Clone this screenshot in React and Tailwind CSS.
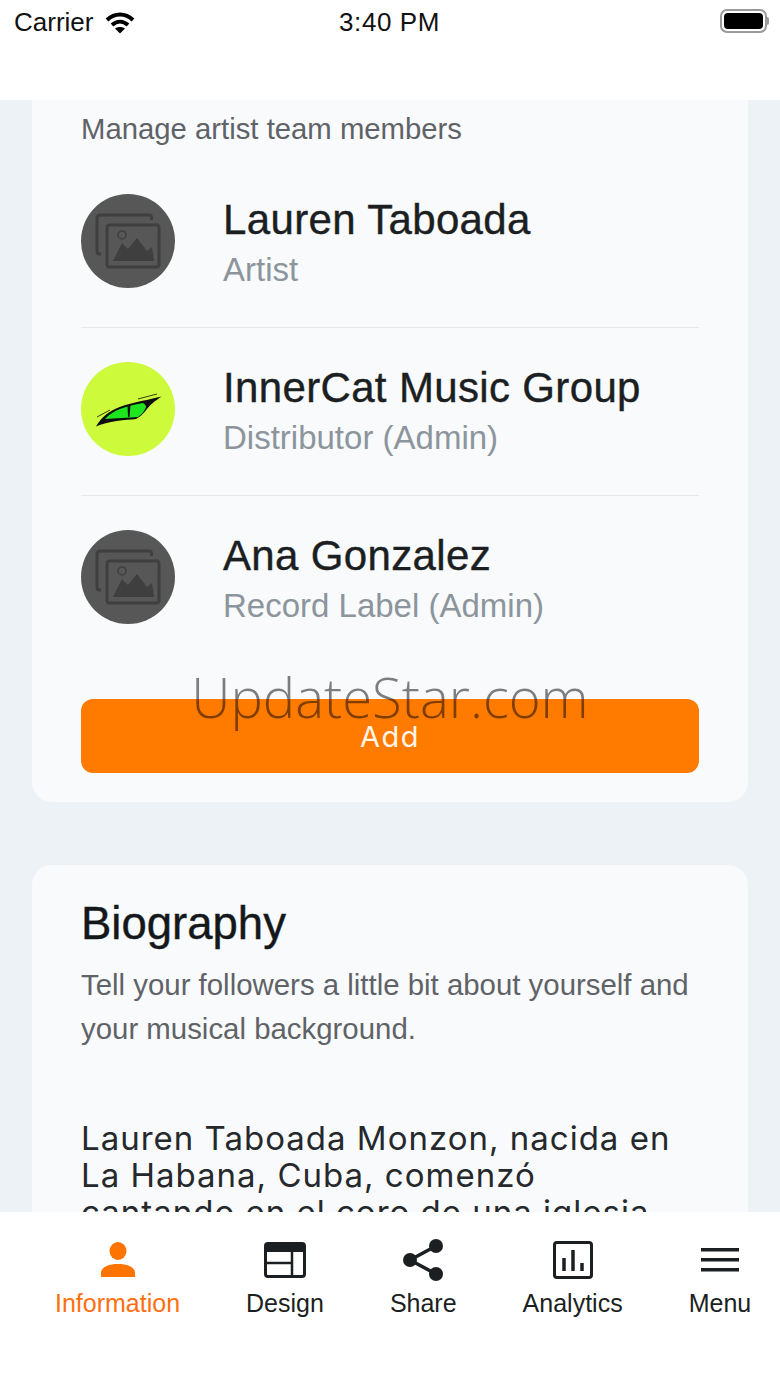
import React from "react";

const helvetica = "font-['Liberation_Sans',Arial,sans-serif]";

const members = [
  { name: "Lauren Taboada", role: "Artist", avatar: "placeholder" },
  { name: "InnerCat Music Group", role: "Distributor (Admin)", avatar: "cat" },
  { name: "Ana Gonzalez", role: "Record Label (Admin)", avatar: "placeholder" },
];

const PlaceholderAvatar = () => (
  <div className="flex h-[94px] w-[94px] shrink-0 items-center justify-center rounded-full bg-[#575757]">
    <svg width="66" height="56" viewBox="0 0 66 56" fill="none">
      <path d="M6 41H4.500A2.500 2.500 0 0 1 2 38.500V5a3 3 0 0 1 3-3h49a2.500 2.500 0 0 1 2.500 2.500V7" stroke="#3f3f3f" strokeWidth="3" />
      <rect x="12" y="12" width="52" height="42" rx="2.500" stroke="#3f3f3f" strokeWidth="3" />
      <path d="M18 48 27 30l6 6 9-11 10 13 5-4 2 14z" fill="#3f3f3f" />
      <circle cx="27" cy="22" r="4" stroke="#3f3f3f" strokeWidth="1.500" />
    </svg>
  </div>
);

const CatAvatar = () => (
  <div className="flex h-[94px] w-[94px] shrink-0 items-center justify-center rounded-full bg-[#cdfb3b]">
    <svg width="70" height="36" viewBox="0 0 70 36">
      <path d="M3 35.500C8 27 14 22 22 18 32 13 50 10 68.700 5.500 62 10 58 13 54 18 50 23 47 26 43 28 34 29 14 30 3 35.500z" fill="#0d0d0d" />
      <path d="M12 28C17 23 21 20 27 18 35 15 44 13 50 12 52 13 53 15 53 16 51 21 48 24 45 26 36 27 22 27 12 28z" fill="#1fe51f" />
      <path d="M34.500 14h3l-1 12h-1.500z" fill="#0d0d0d" />
      <path d="M45 8 64 3M4 26 17 19" stroke="#0d0d0d" strokeWidth="0.800" fill="none" />
    </svg>
  </div>
);

const MemberRow = ({ member, last }) => (
  <div className={`flex items-center ${last ? "" : "mb-[34px] border-b border-[#e6e9ec] pb-[39px]"}`}>
    <div className="w-[142px] shrink-0">
      {member.avatar === "cat" ? <CatAvatar /> : <PlaceholderAvatar />}
    </div>
    <div className="pt-[2px]">
      <div className="text-[42px] font-medium leading-[48px] tracking-[0.35px] text-[#1c1f22] [-webkit-text-stroke:0.4px_#1c1f22]">{member.name}</div>
      <div className="mt-[8px] text-[33px] leading-[36px] text-[#8d959c]">{member.role}</div>
    </div>
  </div>
);

const PersonIcon = () => (
  <svg width="36" height="36" viewBox="0 0 36 36" fill="#ff7300">
    <ellipse cx="18" cy="9" rx="8.500" ry="9" />
    <path d="M1 35v-4c0-6 8-9 17-9s17 3 17 9v4z" />
  </svg>
);

const DesignIcon = () => (
  <svg width="42" height="36" viewBox="0 0 42 36">
    <rect x="1.500" y="1.500" width="39" height="33" rx="2.500" fill="white" stroke="#1c1f22" strokeWidth="3" />
    <rect x="1" y="1" width="40" height="9" rx="2" fill="#1c1f22" />
    <path d="M28 10v24M3 21h25" stroke="#1c1f22" strokeWidth="2.500" />
  </svg>
);

const ShareIcon = () => (
  <svg width="40" height="42" viewBox="0 0 40 42" fill="#1c1f22">
    <circle cx="33" cy="7" r="7" />
    <circle cx="7" cy="21" r="7" />
    <circle cx="33" cy="35" r="7" />
    <path d="M33 7 7 21l26 14" fill="none" stroke="#1c1f22" strokeWidth="3.500" />
  </svg>
);

const AnalyticsIcon = () => (
  <svg width="40" height="38" viewBox="0 0 40 38">
    <rect x="1.500" y="1.500" width="37" height="35" rx="2.500" fill="white" stroke="#1c1f22" strokeWidth="3" />
    <path d="M11 17v13M20 9v21M29 22v8" stroke="#1c1f22" strokeWidth="3.500" />
  </svg>
);

const MenuIcon = () => (
  <svg width="38" height="24" viewBox="0 0 38 24" fill="#1c1f22">
    <rect width="38" height="3.500" />
    <rect y="10" width="38" height="3.500" />
    <rect y="20" width="38" height="3.500" />
  </svg>
);

const tabs = [
  { label: "Information", icon: <PersonIcon />, active: true },
  { label: "Design", icon: <DesignIcon /> },
  { label: "Share", icon: <ShareIcon /> },
  { label: "Analytics", icon: <AnalyticsIcon /> },
  { label: "Menu", icon: <MenuIcon /> },
];

export default function App() {
  return (
    <div className={`relative flex h-[1387px] w-[780px] flex-col overflow-hidden bg-white ${helvetica}`}>
      {/* Status bar */}
      <div className="relative flex h-[100px] shrink-0 items-start justify-between bg-white pl-[14px] pr-[11px] pt-[9px] text-[26px] leading-[26px] text-[#111]">
        <div className="flex items-center gap-[12px]">
          <span>Carrier</span>
          <svg width="30" height="23" viewBox="0 0 30 22" fill="none" stroke="#000" strokeWidth="4">
            <path d="M2 8.500C9.500 1 20.500 1 28 8.500" />
            <path d="M7 13.500C12 9 18 9 23 13.500" />
            <path d="M15 22 10 17C13 15 17 15 20 17z" fill="#000" stroke="none" />
          </svg>
        </div>
        <span className="absolute left-[339px] top-[9px] font-medium tracking-[0.6px]">3:40 PM</span>
        <div className="flex items-center">
          <div className="flex h-[24px] w-[47px] items-center rounded-[7px] border-2 border-[#9a9a9a] p-[2px]">
            <div className="h-full w-full rounded-[4px] bg-black" />
          </div>
          <div className="h-[8px] w-[2px] rounded-r bg-[#9a9a9a]" />
        </div>
      </div>

      {/* Scrolling content */}
      <div className="flex-1 overflow-hidden bg-[#edf2f7] px-[32px]">
        <div className="rounded-b-[20px] bg-[#f8fafc] px-[49px] pb-[29px] pt-[7px]">
          <p className="mb-[43px] text-[29.300px] leading-[44px] text-[#5f6367]">Manage artist team members</p>
          {members.map((m, i) => (
            <MemberRow key={m.name} member={m} last={i === members.length - 1} />
          ))}
          <button className="mt-[75px] flex h-[74px] w-full items-center justify-center rounded-[12px] bg-[#ff7b00] pt-[2px] font-['Inter',sans-serif] text-[29px] font-normal tracking-[1.5px] text-[#fff5ea]">
            Add
          </button>
        </div>

        <div className="mt-[63px] rounded-[20px] bg-[#f8fafc] px-[49px] pt-[31px]">
          <h2 className="text-[45.500px] font-medium leading-[56px] text-[#15181b] [-webkit-text-stroke:0.4px_#15181b]">Biography</h2>
          <p className="mt-[11px] text-[29.400px] leading-[44px] text-[#5f6367]">
            Tell your followers a little bit about yourself and your musical background.
          </p>
          <p className="mt-[69px] max-w-[600px] font-['Inter',sans-serif] text-[33px] leading-[37px] tracking-[1px] text-[#26292c]">
            Lauren Taboada Monzon, nacida en La Habana, Cuba, comenzó cantando en el coro de una iglesia
          </p>
        </div>
      </div>

      {/* Tab bar */}
      <div className="flex h-[175px] shrink-0 gap-[66px] bg-white pl-[55px] pt-[26px]">
        {tabs.map((t) => (
          <div key={t.label} className="flex flex-col items-center">
            <div className="flex h-[44px] items-center justify-center">{t.icon}</div>
            <span className={`mt-[6px] text-[25px] leading-[30px] ${t.active ? "text-[#ff6f0f]" : "text-[#1c1f22]"}`}>
              {t.label}
            </span>
          </div>
        ))}
      </div>

      {/* Watermark */}
      <div className="pointer-events-none absolute left-0 right-0 top-[659px] text-center font-['Open_Sans',sans-serif] text-[54.400px] font-light leading-[76px] text-black/50">
        UpdateStar.com
      </div>
    </div>
  );
}
